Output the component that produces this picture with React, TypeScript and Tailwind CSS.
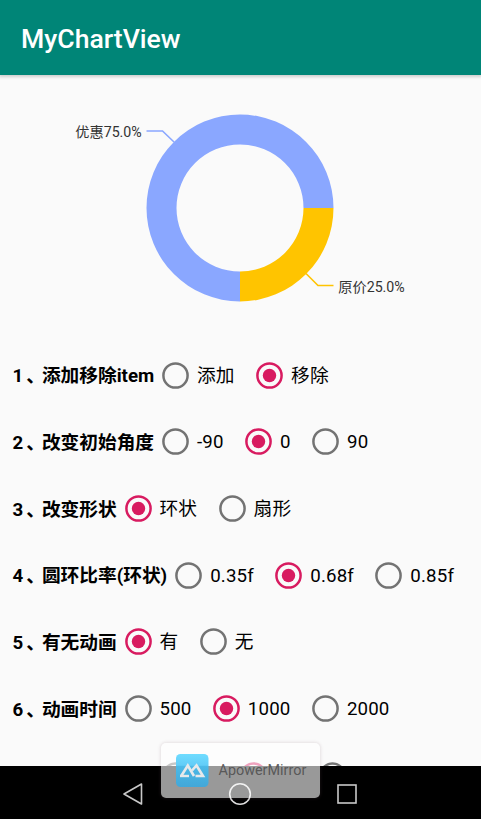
type Option = { text: string; width?: string };
type Setting = { index: string; label: string; width: string; options: Option[]; selected: number };

const settings: Setting[] = [
  { index: '1', label: '添加移除item', width: 'w-[141.5px]', options: [{ text: '添加' }, { text: '移除' }], selected: 1 },
  { index: '2', label: '改变初始角度', width: 'w-[141.5px]', options: [{ text: '-90' }, { text: '0' }, { text: '90' }], selected: 1 },
  { index: '3', label: '改变形状', width: 'w-[104px]', options: [{ text: '环状' }, { text: '扇形' }], selected: 0 },
  { index: '4', label: '圆环比率(环状)', width: 'w-[154.7px]', options: [{ text: '0.35f' }, { text: '0.68f' }, { text: '0.85f' }], selected: 1 },
  { index: '5', label: '有无动画', width: 'w-[104px]', options: [{ text: '有' }, { text: '无' }], selected: 0 },
  { index: '6', label: '动画时间', width: 'w-[104px]', options: [{ text: '500' }, { text: '1000' }, { text: '2000' }], selected: 1 },
  {
    index: '',
    label: '',
    width: 'w-[141.5px]',
    options: [
      { text: '', width: 'w-[22px]' },
      { text: '', width: 'w-[22px]' },
      { text: '', width: 'w-[22px]' },
    ],
    selected: 1,
  },
];

function Radio({ checked }: { checked: boolean }) {
  const color = checked ? '#d81b60' : '#737373';
  return (
    <svg width="27" height="27" viewBox="0 0 27 27" className="mx-2 shrink-0">
      <circle cx="13.5" cy="13.5" r="12.1" fill="none" stroke={color} strokeWidth="2.5" />
      {checked && <circle cx="13.5" cy="13.5" r="6.7" fill={color} />}
    </svg>
  );
}

function SettingRow({ setting }: { setting: Setting }) {
  return (
    <div className="flex h-[66.7px] shrink-0 items-center pl-[12.5px] text-[18.7px] leading-none whitespace-nowrap text-black">
      <span className={`flex shrink-0 pt-[3px] font-bold ${setting.width}`}>
        {setting.index}
        {setting.index && <span className="ml-[3px] tracking-[-3px]">、</span>}
        {setting.label}
      </span>
      <div className="flex gap-[13.4px]">
        {setting.options.map((option, i) => (
          <div key={i} className="flex items-center">
            <Radio checked={i === setting.selected} />
            <span className={`pt-[2px] tracking-[0.15px] ${option.width ?? ''}`}>{option.text}</span>
          </div>
        ))}
      </div>
    </div>
  );
}

function DonutChart() {
  return (
    <svg width="481" height="266.7" viewBox="0 75 481 266.7" className="shrink-0">
      <path d="M333.5 208A93.5 93.5 0 1 0 240 301.5V271.5A63.5 63.5 0 1 1 303.5 208Z" fill="#8aa7ff" />
      <path d="M333.5 208A93.5 93.5 0 0 1 240 301.5V271.5A63.5 63.5 0 0 0 303.5 208Z" fill="#ffc400" />
      <path d="M146.5 131H162.5L174 142" fill="none" stroke="#8aa7ff" strokeWidth="1.6" />
      <path d="M306 273.5L318 285.5H333.5" fill="none" stroke="#ffc400" strokeWidth="1.6" />
      <text x="75.3" y="137.4" fontSize="14.2" fill="#333">优惠75.0%</text>
      <text x="338.3" y="292.3" fontSize="14.2" fill="#333">原价25.0%</text>
    </svg>
  );
}

function MirrorBadge() {
  return (
    <div className="absolute top-[743px] left-[161px] flex h-[54.5px] w-[158.5px] items-center rounded-[5px] bg-white/60 pl-[15px] shadow-[0_0_3px_1px_rgba(120,90,100,0.15)]">
      <svg width="32.5" height="33" viewBox="0 0 32.5 33" className="shrink-0">
        <defs>
          <linearGradient id="tile" x1="0" y1="0" x2="0" y2="1">
            <stop offset="0" stopColor="#6fdcff" />
            <stop offset="0.34" stopColor="#62cdf8" />
            <stop offset="0.38" stopColor="#4bb9e7" />
            <stop offset="1" stopColor="#43a7d8" />
          </linearGradient>
        </defs>
        <rect width="32.5" height="33" rx="4.5" fill="url(#tile)" />
        <path d="M5.2 22L11.8 11.5L18 22" fill="none" stroke="#e6e9eb" strokeWidth="2.6" />
        <path d="M4 22H13" fill="none" stroke="#e6e9eb" strokeWidth="2.4" />
        <path d="M16 16.5L20.5 11.5L27 22H19.5" fill="none" stroke="#e6e9eb" strokeWidth="2.6" />
      </svg>
      <span className="ml-2.5 pt-0.5 text-[14.4px] leading-none text-[#505050]/90">ApowerMirror</span>
    </div>
  );
}

export default function App() {
  return (
    <div className="relative flex h-[819px] w-[481px] flex-col overflow-hidden bg-[#fafafa] font-[Roboto,'Noto_Sans_CJK_SC',sans-serif]">
      <header className="z-10 flex h-[75px] shrink-0 items-center bg-[#008577] pt-[3px] pl-[21px] shadow-[0_1px_3px_1px_rgba(0,0,0,0.18)]">
        <h1 className="text-[26.6px] leading-none font-medium text-white">MyChartView</h1>
      </header>
      <main className="flex h-[691px] shrink-0 flex-col overflow-hidden">
        <DonutChart />
        {settings.map((setting, i) => (
          <SettingRow key={i} setting={setting} />
        ))}
      </main>
      <nav className="h-[53px] shrink-0 bg-black">
        <svg width="481" height="53" viewBox="0 766 481 53" fill="none" stroke="#c8c8c8" strokeWidth="1.6">
          <path d="M141.5 784L124 794L141.5 804Z" strokeLinejoin="round" />
          <circle cx="240" cy="794" r="10.3" stroke="#dedede" />
          <rect x="338" y="785" width="18" height="18" />
        </svg>
      </nav>
      <MirrorBadge />
    </div>
  );
}
